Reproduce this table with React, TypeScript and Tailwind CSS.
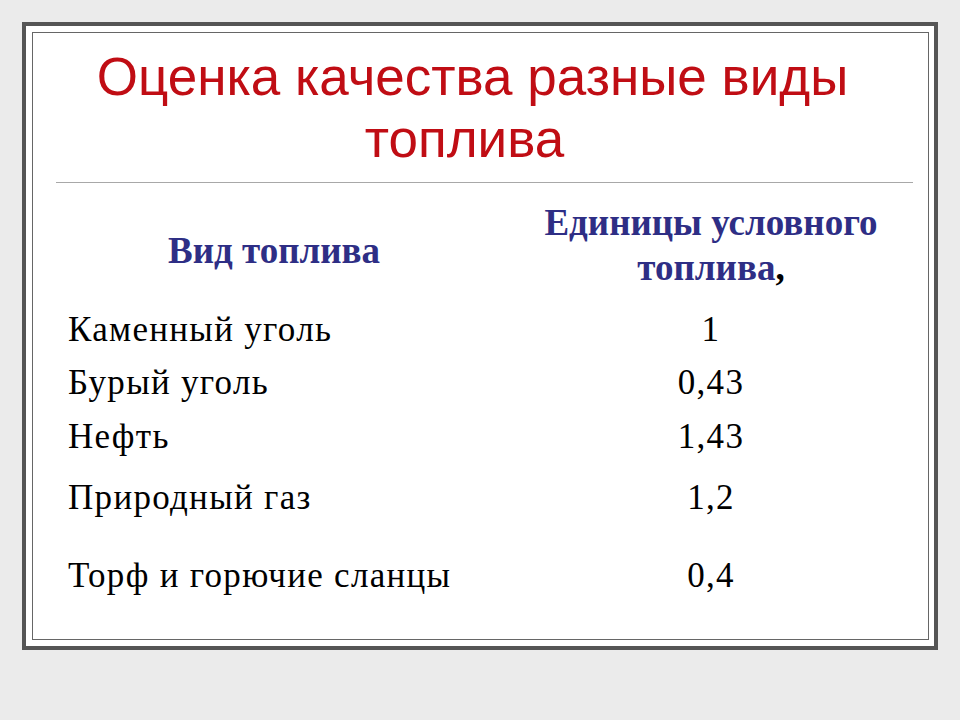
import React from "react";

const rows: { name: string; value: string; h: string }[] = [
  { name: "Каменный уголь", value: "1", h: "h-[53px]" },
  { name: "Бурый уголь", value: "0,43", h: "h-[54px]" },
  { name: "Нефть", value: "1,43", h: "h-[61px]" },
  { name: "Природный газ", value: "1,2", h: "h-[78px]" },
  { name: "Торф и горючие сланцы", value: "0,4", h: "h-[44px]" },
];

export default function App() {
  return (
    <div className="w-[960px] h-[720px] bg-[#ebebeb] pt-[22px] pl-[22px] overflow-hidden">
      <div className="w-[916px] h-[628px] border-4 border-[#555555] bg-white pt-[6px] pl-[6px] pr-[5px] pb-[6px]">
        <div className="w-full h-full border border-[#666666] bg-white">
          <div
            className="mt-[13px] text-center text-[53px] leading-[62px] text-[#c00d14]"
            style={{ fontFamily: '"Liberation Sans", Arial, sans-serif' }}
          >
            <div className="pr-[16px]">Оценка качества разные виды</div>
            <div className="pr-[32px]">топлива</div>
          </div>
          <div className="mt-[12px] ml-[23px] w-[857px] h-px bg-[#a8a8a8]" />
          <div
            className="ml-[23px] mt-[17px]"
            style={{ fontFamily: '"Liberation Serif", "Times New Roman", serif' }}
          >
            <div className="grid grid-cols-[436px_438px] h-[110px] font-bold text-[37px] leading-[45px] text-[#2e2e85]">
              <div className="text-center pt-[28px]">Вид топлива</div>
              <div className="text-center">
                <div>Единицы условного</div>
                <div>
                  топлива<span className="text-black">,</span>
                </div>
              </div>
            </div>
            {rows.map((r) => (
              <div
                key={r.name}
                className={`grid grid-cols-[436px_438px] ${r.h} text-[35px] leading-[40px] tracking-[1.3px] text-black`}
              >
                <div className="pl-[12px] whitespace-nowrap">{r.name}</div>
                <div className="text-center">{r.value}</div>
              </div>
            ))}
          </div>
        </div>
      </div>
    </div>
  );
}
